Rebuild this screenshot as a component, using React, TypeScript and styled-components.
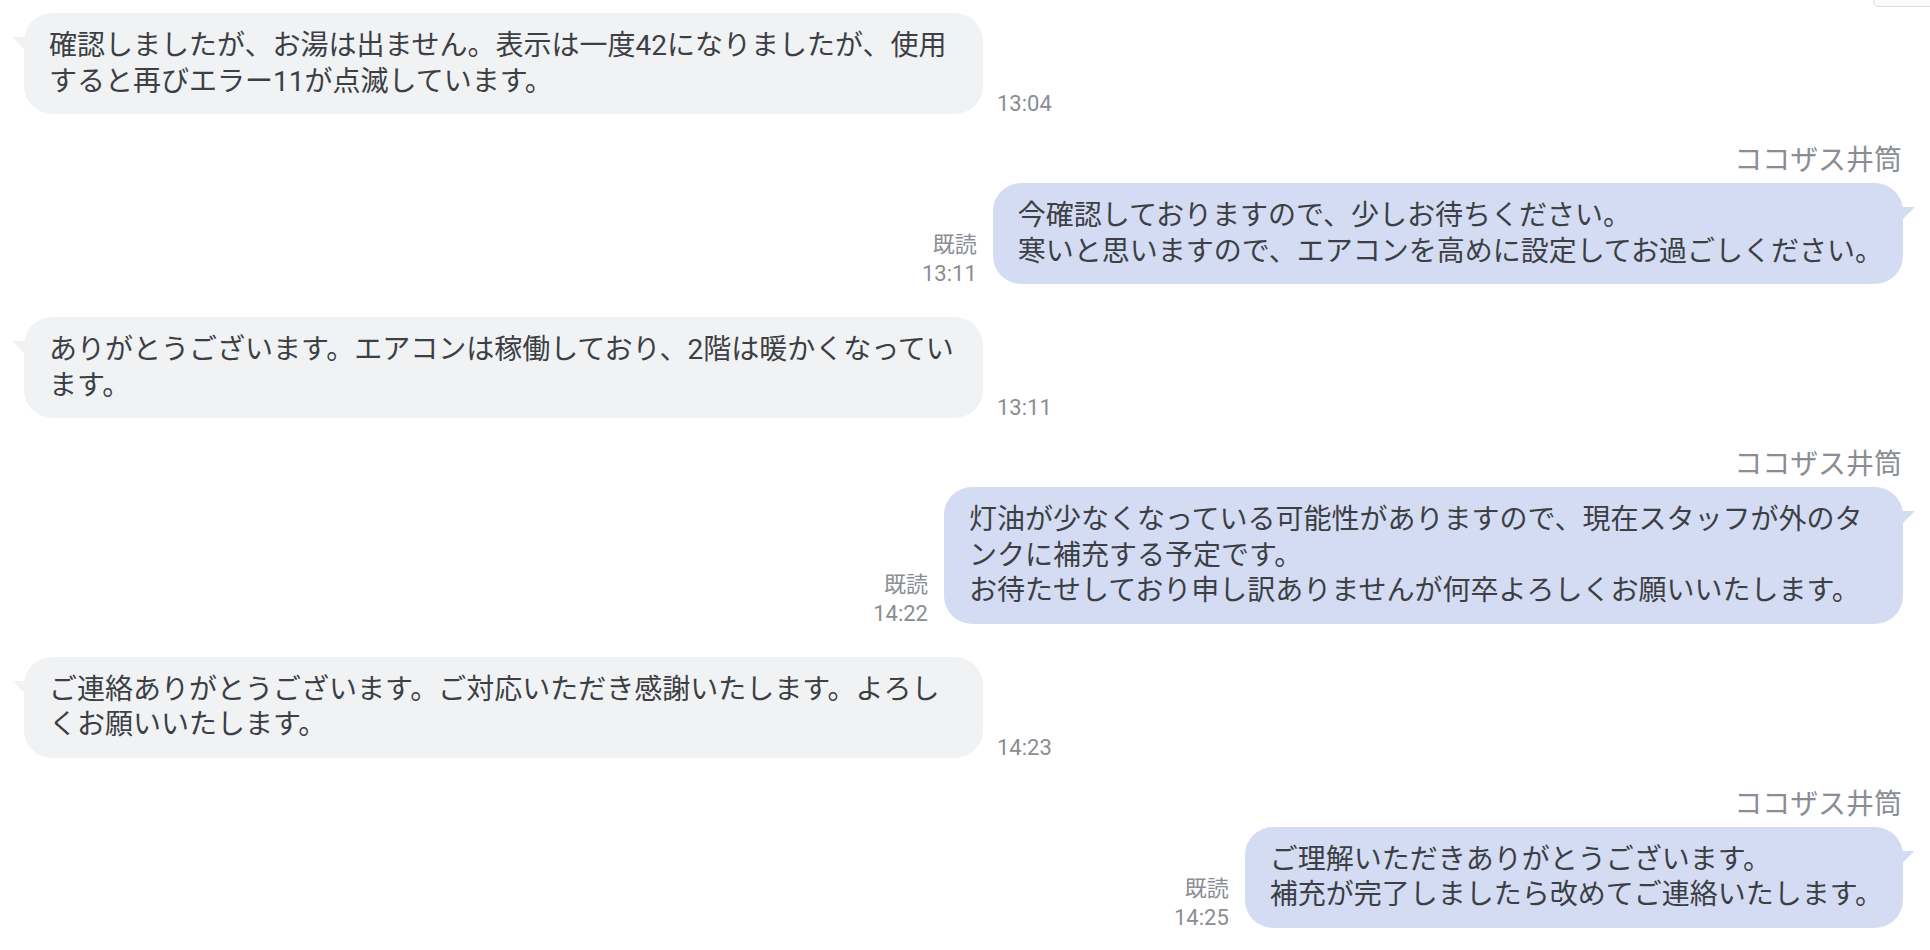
import React from 'react';
import styled, { createGlobalStyle } from 'styled-components';

const GlobalStyle = createGlobalStyle`
  html, body {
    margin: 0;
    padding: 0;
    background: #ffffff;
  }
  body {
    font-family: Roboto, "Noto Sans CJK JP", sans-serif;
  }
`;

type Side = 'left' | 'right';

interface Message {
  side: Side;
  text: string;
  time: string;
  name?: string;
  read?: boolean;
}

const messages: Message[] = [
  {
    side: 'left',
    text: '確認しましたが、お湯は出ません。表示は一度42になりましたが、使用すると再びエラー11が点滅しています。',
    time: '13:04',
  },
  {
    side: 'right',
    name: 'ココザス井筒',
    read: true,
    text: '今確認しておりますので、少しお待ちください。\n寒いと思いますので、エアコンを高めに設定してお過ごしください。',
    time: '13:11',
  },
  {
    side: 'left',
    text: 'ありがとうございます。エアコンは稼働しており、2階は暖かくなっています。',
    time: '13:11',
  },
  {
    side: 'right',
    name: 'ココザス井筒',
    read: true,
    text: '灯油が少なくなっている可能性がありますので、現在スタッフが外のタンクに補充する予定です。\nお待たせしており申し訳ありませんが何卒よろしくお願いいたします。',
    time: '14:22',
  },
  {
    side: 'left',
    text: 'ご連絡ありがとうございます。ご対応いただき感謝いたします。よろしくお願いいたします。',
    time: '14:23',
  },
  {
    side: 'right',
    name: 'ココザス井筒',
    read: true,
    text: 'ご理解いただきありがとうございます。\n補充が完了しましたら改めてご連絡いたします。',
    time: '14:25',
  },
];

const Page = styled.div`
  position: relative;
  box-sizing: border-box;
  width: 100%;
  height: 950px;
  overflow: hidden;
  padding: 13px 27px 0 24px;
  display: flex;
  flex-direction: column;
  gap: 33px;
`;

const CornerBox = styled.div`
  position: absolute;
  top: -20px;
  right: -10px;
  width: 67px;
  height: 27px;
  box-sizing: border-box;
  border: 1px solid #d9dce1;
  border-radius: 6px;
  background: #fbfbfc;
`;

const Row = styled.div<{ $side: Side }>`
  display: flex;
  flex-direction: column;
  align-items: ${(p) => (p.$side === 'left' ? 'flex-start' : 'flex-end')};
`;

const Name = styled.div`
  font-size: 28px;
  line-height: 28px;
  color: #8a8d93;
  margin-bottom: 8px;
  padding-right: 1px;
`;

const Line = styled.div<{ $side: Side }>`
  display: flex;
  align-items: flex-end;
  gap: ${(p) => (p.$side === 'left' ? '14px' : '16px')};
`;

const Bubble = styled.div<{ $side: Side }>`
  position: relative;
  box-sizing: border-box;
  max-width: 959px;
  padding: 15px 20px 15px 25px;
  border-radius: 28px;
  background: ${(p) => (p.$side === 'left' ? '#f1f2f4' : '#d4dcf3')};
  color: #3c3f44;
  font-size: 28px;
  line-height: 35.5px;
  white-space: pre-wrap;

  &::before {
    content: '';
    position: absolute;
    top: 24px;
    width: 19px;
    height: 19px;
    background: inherit;
    ${(p) =>
      p.$side === 'left'
        ? 'left: -12px; clip-path: polygon(0 0, 100% 0, 100% 100%);'
        : 'right: -12px; clip-path: polygon(0 0, 100% 0, 0 100%);'}
  }
`;

const Meta = styled.div<{ $side: Side }>`
  display: flex;
  flex-direction: column;
  align-items: ${(p) => (p.$side === 'left' ? 'flex-start' : 'flex-end')};
  font-size: 22px;
  line-height: 29px;
  color: #8a8d93;
  margin-bottom: -4px;
  white-space: nowrap;
`;

export default function App() {
  return (
    <>
      <GlobalStyle />
      <Page>
        <CornerBox />
        {messages.map((m, i) => (
          <Row key={i} $side={m.side}>
            {m.name && <Name>{m.name}</Name>}
            <Line $side={m.side}>
              {m.side === 'right' && (
                <Meta $side="right">
                  {m.read && <span>既読</span>}
                  <span>{m.time}</span>
                </Meta>
              )}
              <Bubble $side={m.side}>{m.text}</Bubble>
              {m.side === 'left' && (
                <Meta $side="left">
                  <span>{m.time}</span>
                </Meta>
              )}
            </Line>
          </Row>
        ))}
      </Page>
    </>
  );
}
